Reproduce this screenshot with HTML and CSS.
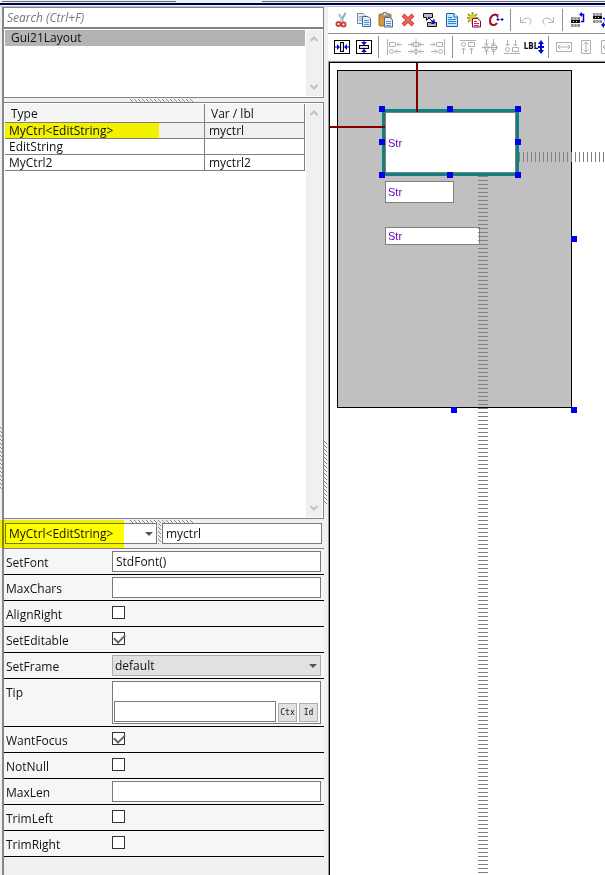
FILE: index.html
```html
<!DOCTYPE html>
<html lang="en">
<head>
<meta charset="utf-8">
<title>Layout designer</title>
<link rel="stylesheet" href="styles.css">
</head>
<body>
<svg class="defs" aria-hidden="true">
  <symbol id="up" viewBox="0 0 8 6"><path d="M0.5 5L4 1.5L7.500 5" fill="none" stroke="#c0c0c0" stroke-width="2"/></symbol>
  <symbol id="down" viewBox="0 0 8 6"><path d="M0.5 1L4 4.500L7.500 1" fill="none" stroke="#c0c0c0" stroke-width="2"/></symbol>
  <symbol id="tri" viewBox="0 0 8 4"><path d="M0 0H8L4 4Z" fill="#555"/></symbol>
</svg>
<header class="topstrip"><span class="tab-a"></span><span class="tab-b"></span></header>
<div class="workspace">
  <div class="edge"><i class="grip grip-edge"></i></div>
  <aside class="sidebar">
    <input class="search" type="search" aria-label="Search" placeholder="Search (Ctrl+F)">
    <section class="pane layouts">
      <ul class="list"><li class="selected">Gui21Layout</li></ul>
      <div class="scroll">
        <button aria-label="Scroll up"><svg><use href="#up"/></svg></button>
        <button aria-label="Scroll down"><svg><use href="#down"/></svg></button>
      </div>
    </section>
    <div class="split"><i class="grip grip-h"></i></div>
    <section class="pane items">
      <div class="table-wrap">
        <table>
          <thead><tr><th>Type</th><th>Var / lbl</th></tr></thead>
          <tbody>
            <tr class="current"><td>MyCtrl&lt;EditString&gt;</td><td>myctrl</td></tr>
            <tr><td>EditString</td><td></td></tr>
            <tr><td>MyCtrl2</td><td>myctrl2</td></tr>
          </tbody>
        </table>
      </div>
      <div class="scroll">
        <button aria-label="Scroll up"><svg><use href="#up"/></svg></button>
        <button aria-label="Scroll down"><svg><use href="#down"/></svg></button>
      </div>
    </section>
    <div class="split"><i class="grip grip-h"></i></div>
    <div class="identity">
      <span class="combo"><select aria-label="Type"><option>MyCtrl&lt;EditString&gt;</option></select><svg><use href="#tri"/></svg></span>
      <i class="grip grip-v"></i>
      <input type="text" aria-label="Variable" value="myctrl">
      <i class="marker"></i>
    </div>
    <form class="props">
      <div class="prop"><label for="font">SetFont</label><input id="font" type="text" value="StdFont()"></div>
      <div class="prop"><label for="maxchars">MaxChars</label><input id="maxchars" type="text"></div>
      <div class="prop"><label for="align">AlignRight</label><input id="align" type="checkbox"></div>
      <div class="prop"><label for="editable">SetEditable</label><input id="editable" type="checkbox" checked></div>
      <div class="prop"><label for="frame">SetFrame</label><span class="combo grey"><select id="frame"><option>default</option></select><svg><use href="#tri"/></svg></span></div>
      <div class="prop"><label for="tip">Tip</label><div class="tip"><input id="tip" type="text"><button type="button">Ctx</button><button type="button">Id</button></div></div>
      <div class="prop"><label for="focus">WantFocus</label><input id="focus" type="checkbox" checked></div>
      <div class="prop"><label for="notnull">NotNull</label><input id="notnull" type="checkbox"></div>
      <div class="prop"><label for="maxlen">MaxLen</label><input id="maxlen" type="text"></div>
      <div class="prop"><label for="trimleft">TrimLeft</label><input id="trimleft" type="checkbox"></div>
      <div class="prop"><label for="trimright">TrimRight</label><input id="trimright" type="checkbox"></div>
    </form>
  </aside>
  <div class="divider"><i class="grip grip-side"></i></div>
  <main class="designer">
    <div class="toolbar">
      <button aria-label="Cut"><svg viewBox="0 0 16 16"><path d="M11.500 1L7 9M5 2L9 9.500" fill="none" stroke="#8aa9c4" stroke-width="2"/><path d="M5 2L8.500 9" stroke="#c8dcea"/><circle cx="4.500" cy="12" r="2" fill="none" stroke="#c9453c" stroke-width="2"/><circle cx="9.500" cy="12.500" r="2" fill="none" stroke="#c9453c" stroke-width="2"/></svg></button>
      <button aria-label="Copy"><svg viewBox="0 0 16 16"><path d="M1.500 1.500H7L9.500 4V11.500H1.500Z" fill="#e4eef8" stroke="#6d8cab"/><path d="M3 4.500H7M3 6.500H7M3 8.500H7" stroke="#86a7cc"/><path d="M6.500 4.500H12L14.500 7V14.500H6.500Z" fill="#e4eef8" stroke="#48688c"/><path d="M8 8.500H13M8 10.500H13M8 12.500H13" stroke="#5d92c8"/></svg></button>
      <button aria-label="Paste"><svg viewBox="0 0 16 16"><rect x="1" y="2" width="12" height="12" rx="1" fill="#d6953b" stroke="#a26a24"/><path d="M4 4V2H5.500V0.500H8.500V2H10V4Z" fill="#dadada" stroke="#777"/><path d="M6.500 5.500H12L14.500 8V15H6.500Z" fill="#e4eef8" stroke="#48688c"/><path d="M8 9.500H13M8 11.500H13M8 13.500H13" stroke="#5d92c8"/></svg></button>
      <button aria-label="Delete"><svg viewBox="0 0 16 16"><path d="M3 3L13 13M13 3L3 13" stroke="#cc3b3b" stroke-width="4"/><path d="M3 3L13 13M13 3L3 13" stroke="#ee6961" stroke-width="2"/></svg></button>
      <button aria-label="Rename"><svg viewBox="0 0 16 16"><path d="M1.500 1.500H10.500V5.500H7.500L4.500 8.500V5.500H1.500ZM5.500 10.500H9L12 7.500V10.500H14.500V14.500H5.500Z" fill="#b9b9b9" stroke="#111"/><path d="M6 5L12 11" stroke="#0000e8"/><path d="M12.500 8V12H8.500Z" fill="#0000e8"/></svg></button>
      <button aria-label="Document"><svg viewBox="0 0 16 16"><path d="M2.500 1.500H10L13.500 5V14.500H2.500Z" fill="#c8e5ff" stroke="#1762a8"/><path d="M10 1.500V5H13.500" fill="#fff" stroke="#1762a8"/><path d="M4 5.500H8M4 7.500H12M4 9.500H12M4 11.500H12" stroke="#2585db"/></svg></button>
      <button aria-label="New item"><svg viewBox="0 0 16 16"><path d="M6.500 0V12M1 6H12.500M2 2L11 10M11 2L2 10" stroke="#a3a31b" stroke-width="2"/><circle cx="6.500" cy="6" r="3" fill="#d3d329"/><path d="M6.500 6.500H11.500L14.500 9V15H6.500Z" fill="#fff" stroke="#850064"/><path d="M8 9.500H11M8 11.500H13M8 13.500H13" stroke="#d62a32"/></svg></button>
      <button aria-label="Code"><svg viewBox="0 0 16 16"><path d="M9.500 4.500C8.500 0.500 2 3 2 9C2 14 7 14 9 11" fill="none" stroke="#99151c" stroke-width="2"/><path d="M10 2L9.500 6" stroke="#99151c"/><path d="M8.500 7.500H11.500M10 6V9M12.500 7.500H15.500M14 6V9" stroke="#0000c8"/></svg></button>
      <i class="sep"></i>
      <button aria-label="Undo"><svg viewBox="0 0 16 16"><path d="M2.500 5V10.500H8M3 10C6 5 13 5 13 9C13 11 12 12 11 12.500" fill="none" stroke="#b4b4b4"/></svg></button>
      <button aria-label="Redo"><svg viewBox="0 0 16 16"><path d="M13.500 5V10.500H8M13 10C10 5 3 5 3 9C3 11 4 12 5 12.500" fill="none" stroke="#b4b4b4"/></svg></button>
      <i class="sep"></i>
      <button aria-label="Move up"><svg viewBox="0 0 16 16"><path d="M1 5H10V8H1ZM1 12H10V15H1Z" fill="#8e8e8e"/><path d="M1 8H10V11H1Z" fill="#111"/><path d="M4 5V8M7 5V8M4 12V15M7 12V15M3 9L4 10M6 9L7 10" stroke="#ddd"/><path d="M11 9.500H13.500V2.500H10.500" fill="none" stroke="#0000df" stroke-width="1.500"/><path d="M9 2.500L12 0V5Z" fill="#0000df"/></svg></button>
      <button aria-label="Move down"><svg viewBox="0 0 16 16"><path d="M1 1H10V4H1ZM1 8H10V11H1Z" fill="#8e8e8e"/><path d="M1 4H10V7H1Z" fill="#111"/><path d="M4 1V4M7 1V4M4 8V11M7 8V11M3 5L4 6M6 5L7 6" stroke="#ddd"/><path d="M11 6.500H13.500V13H10.500" fill="none" stroke="#0000df" stroke-width="1.500"/><path d="M9 13L12 10V16Z" fill="#0000df"/></svg></button>
    </div>
    <div class="toolbar second">
      <button aria-label="Center horizontally"><svg viewBox="0 0 16 16"><rect x="0.500" y="1.500" width="15" height="13" fill="#fff" stroke="#000"/><rect x="6.500" y="3.500" width="3" height="9" fill="#ddd" stroke="#000"/><path d="M1 8H5M15 8H11" stroke="#0000e8"/><path d="M3 5V11L6 8ZM13 5V11L10 8Z" fill="#0000e8"/></svg></button>
      <button aria-label="Center vertically"><svg viewBox="0 0 16 16"><rect x="0.500" y="1.500" width="15" height="13" fill="#fff" stroke="#000"/><rect x="3.500" y="6.500" width="9" height="3" fill="#ddd" stroke="#000"/><path d="M8 2V6M8 14V10" stroke="#0000e8"/><path d="M5 3H11L8 6ZM5 13H11L8 10Z" fill="#0000e8"/></svg></button>
      <i class="sep"></i>
      <button aria-label="Align left"><svg viewBox="0 0 16 16" class="dim"><path d="M1.500 0V16M3.500 3.500H9.500V7.500H3.500ZM11 5.500H16M13 3.500L11 5.500L13 7.500M9 12.500H15M11 10.500L9 12.500L11 14.500"/><circle cx="5.500" cy="12.500" r="2"/></svg></button>
      <button aria-label="Align center"><svg viewBox="0 0 16 16" class="dim"><path d="M8 0V16M5.500 3.500H10.500V7.500H5.500ZM0 5.500H5M3 3.500L5 5.500L3 7.500M16 5.500H11M13 3.500L11 5.500L13 7.500M0 12.500H5M3 10.500L5 12.500L3 14.500M16 12.500H11M13 10.500L11 12.500L13 14.500"/><circle cx="8" cy="12.500" r="2"/></svg></button>
      <button aria-label="Align right"><svg viewBox="0 0 16 16" class="dim"><path d="M14.500 0V16M6.500 3.500H12.500V7.500H6.500ZM0 5.500H5M3 3.500L5 5.500L3 7.500M1 12.500H7M5 10.500L7 12.500L5 14.500"/><circle cx="10.500" cy="12.500" r="2"/></svg></button>
      <i class="sep"></i>
      <button aria-label="Align top"><svg viewBox="0 0 16 16" class="dim"><path d="M0 1.500H16M8.500 3.500H14.500V7.500H8.500ZM3.500 9V15M1.500 11L3.500 9L5.500 11M11.500 9V15M9.500 11L11.500 9L13.500 11"/><circle cx="3.500" cy="5.500" r="2"/></svg></button>
      <button aria-label="Align middle"><svg viewBox="0 0 16 16" class="dim"><path d="M0 8.500H16M9.500 6.500H14.500V10.500H9.500ZM4.500 0V6M2.500 4L4.500 6L6.500 4M11.500 0V6M9.500 4L11.500 6L13.500 4M4.500 16V11M2.500 13L4.500 11L6.500 13M11.500 16V11M9.500 13L11.500 11L13.500 13"/><circle cx="4.500" cy="8.500" r="2"/></svg></button>
      <button aria-label="Align bottom"><svg viewBox="0 0 16 16" class="dim"><path d="M0 14.500H16M8.500 8.500H14.500V12.500H8.500ZM3.500 1V7M1.500 5L3.500 7L5.500 5M11.500 1V7M9.500 5L11.500 7L13.500 5"/><circle cx="3.500" cy="10.500" r="2"/></svg></button>
      <button class="lbl" aria-label="Label height"><span>LBL</span><svg viewBox="0 0 6 16"><path d="M3 3V13M0 8H6" stroke="#0000e8" stroke-width="2"/><path d="M3 1L6 5H0ZM3 15L0 11H6Z" fill="#0000e8"/></svg></button>
      <i class="sep"></i>
      <button aria-label="Same width"><svg viewBox="0 0 16 16" class="dim"><path d="M0.500 3.500H15.500V12.500H0.500ZM2 8H14M4.500 5.500L2 8L4.500 10.500M11.500 5.500L14 8L11.500 10.500"/></svg></button>
      <button aria-label="Same height"><svg viewBox="0 0 16 16" class="dim"><path d="M3.500 1.500H12.500V14.500H3.500ZM8 3V13M5.500 5.500L8 3L10.500 5.500M5.500 10.500L8 13L10.500 10.500"/></svg></button>
      <button aria-label="Same size"><svg viewBox="0 0 16 16" class="dim"><path d="M1.500 1.500H15.500V14.500H1.500ZM3 8H13M5.500 5.500L3 8L5.500 10.500M8 3V13"/></svg></button>
    </div>
    <div class="canvas">
      <div class="form"></div>
      <div class="ctrl c2">Str</div>
      <div class="ctrl c3">Str</div>
      <div class="ctrl c1">Str</div>
      <i class="anchor top"></i><i class="anchor left"></i>
      <i class="spring right"></i><i class="spring bottom"></i>
      <i class="h xa ya"></i><i class="h xb ya"></i><i class="h xc ya"></i>
      <i class="h xa yb"></i><i class="h xc yb"></i>
      <i class="h xa yc"></i><i class="h xb yc"></i><i class="h xc yc"></i>
      <i class="h form-e"></i><i class="h form-s"></i><i class="h form-se"></i>
    </div>
  </main>
</div>
</body>
</html>
```
FILE: styles.css
```css
* { box-sizing: border-box; }
body {
  margin: 0;
  height: 100vh;
  display: flex;
  flex-direction: column;
  overflow: hidden;
  background: #f0f0f0;
  color: #111;
  font: 12px/16px "Open Sans", "Noto Sans", sans-serif;
}
input, select, button { font: inherit; color: inherit; margin: 0; border-radius: 0; }
button { padding: 0; border: 0; background: none; }
svg { display: block; }
.defs { position: absolute; width: 0; height: 0; }

.topstrip {
  flex: none;
  height: 7px;
  display: flex;
  justify-content: space-between;
  padding-left: 2px;
  border-bottom: 1px solid #b9bdd6;
  background: linear-gradient(#f0f2f2 3px, #000050 3px 5px, #f0f2f2 5px);
}
.tab-a { width: 174px; height: 2px; border-bottom: 1px solid #667; }
.tab-b { width: 343px; height: 2px; border-bottom: 1px solid #667; }
.workspace { flex: 1; min-height: 0; display: flex; }

.grip {
  --dot: conic-gradient(at 1px 1px, transparent 75%, #888 0);
  display: block;
  background: var(--dot) 0 0 / 4px 4px, var(--dot) 1px 1px / 4px 4px, var(--dot) 2px 2px / 4px 4px;
}
.edge { flex: none; width: 2px; padding-top: 420px; }
.grip-edge { width: 2px; height: 62px; }
.divider { flex: none; width: 4px; padding-top: 434px; }
.grip-side { width: 3px; height: 63px; }
.grip-h { width: 63px; height: 3px; }
.grip-v { width: 3px; height: 21px; }

.sidebar {
  flex: 0 0 322px;
  min-width: 0;
  display: flex;
  flex-direction: column;
  border-left: 2px solid #828790;
}
.search {
  height: 21px;
  padding: 0 3px;
  border: 1px solid #828287;
  border-left: 0;
  outline: 0;
  background: #fff;
  font-style: italic;
}
.search::placeholder { color: #777; opacity: 1; }
.pane {
  display: flex;
  padding: 1px;
  border: 1px solid #828287;
  border-left: 0;
  background: #fff;
}
.layouts { height: 70px; }
.items { flex: 1; min-height: 0; }
.list { flex: 1; margin: 0; padding: 0; list-style: none; }
.selected { height: 16px; padding-left: 6px; background: #b4b4b4; line-height: 16px; }
.scroll {
  width: 16px;
  margin-left: 1px;
  padding: 6px 4px;
  display: flex;
  flex-direction: column;
  justify-content: space-between;
  background: #f0f0f0;
}
.scroll svg { width: 8px; height: 6px; }
.split {
  flex: none;
  height: 4px;
  display: flex;
  justify-content: center;
  align-items: center;
  padding-right: 6px;
}

.table-wrap { flex: 1; }
table { width: 100%; border-collapse: separate; border-spacing: 0; table-layout: fixed; }
th, td {
  height: 16px;
  padding: 0 4px;
  border: solid #808080;
  border-width: 0 1px 1px 0;
  line-height: 15px;
  text-align: left;
  font-weight: normal;
}
th { height: 19px; padding: 0 6px; background: #f5f5f5; }
th:first-child { width: 200px; }
.current td { background: #f0f0f0; }
.current td:first-child { background: linear-gradient(90deg, #f2f200 154px, #f0f0f0 154px); }

.identity { position: relative; flex: none; display: flex; gap: 1px; padding: 0 2px 4px 1px; }
.identity input, .identity .combo { flex: 1; min-width: 0; height: 21px; }
.identity .combo { padding-right: 0; }
.marker {
  position: absolute;
  left: -4px;
  top: -3px;
  width: 124px;
  height: 28px;
  background: #ff0;
  mix-blend-mode: multiply;
}
input[type="text"] { min-width: 0; padding: 0 3px; border: 1px solid #7a7a7a; background: #fff; outline: 0; }
.combo { display: grid; align-items: center; }
.combo > * { grid-area: 1 / 1; }
.combo select {
  width: 100%;
  height: 21px;
  padding: 0 3px;
  border: 1px solid #7a7a7a;
  background: #fff;
  appearance: none;
}
.combo svg { width: 8px; height: 4px; justify-self: end; margin-right: 4px; pointer-events: none; }
.identity > input, .identity > .combo { box-sizing: border-box; flex-basis: 0; }
.grey select { background: #e1e1e1; border-color: #adadad; padding: 0 2px; }

.props { flex: none; height: 327px; border-top: 1px solid #808080; }
.prop {
  display: flex;
  align-items: flex-start;
  min-height: 26px;
  padding: 2px 3px 2px 2px;
  border-bottom: 1px solid #000;
  background: #f6f6f6;
}
.prop label { flex: none; width: 106px; padding-top: 4px; }
.prop > input[type="text"], .prop .combo { flex: 1; min-width: 0; height: 21px; }
.prop input[type="checkbox"] {
  appearance: none;
  width: 13px;
  height: 13px;
  margin-top: 3px;
  border: 1px solid #333;
  background: #fff;
}
.prop input[type="checkbox"]:checked::before {
  content: "";
  display: block;
  width: 9px;
  height: 5px;
  margin: 1px;
  border: solid #666;
  border-width: 0 0 2px 2px;
  transform: rotate(-45deg);
}
.prop .tip {
  flex: 1;
  min-width: 0;
  height: 43px;
  display: flex;
  align-items: flex-end;
  gap: 2px;
  padding: 0 2px 1px 1px;
  border: 1px solid #7a7a7a;
  background: #fff;
}
.tip input { flex: 1; height: 21px; }
.tip button {
  flex: none;
  width: 19px;
  height: 19px;
  border: 1px solid #adadad;
  background: #e1e1e1;
  font: 8px/16px "DejaVu Sans Mono", monospace;
}

.designer { flex: 1; min-width: 0; display: flex; flex-direction: column; }
.toolbar {
  flex: none;
  height: 27px;
  display: flex;
  align-items: center;
  padding-left: 3px;
  border-bottom: 1px solid #909090;
  background: #fff;
  overflow: hidden;
}
.second { height: 26px; border-bottom: 0; }
.second + .canvas { margin-top: 2px; }
.toolbar button { flex: none; width: 22px; display: flex; justify-content: center; align-items: center; }
.toolbar svg { width: 16px; height: 16px; }
.sep { flex: none; width: 8px; height: 22px; background: linear-gradient(#909090, #909090) 3px 0 / 1px 100% no-repeat; }
.dim { fill: none; stroke: #b0b0b0; }
.toolbar .lbl { font: bold 8px/16px "Liberation Sans Narrow", "DejaVu Sans Condensed", sans-serif; }
.toolbar .lbl svg { width: 6px; }

.canvas {
  position: relative;
  flex: 1;
  overflow: hidden;
  border: solid #000;
  border-width: 1px 0 0 1px;
  outline: 1px solid #999;
  margin: 1px 0 0 1px;
  background: #fff;
}
.canvas > * { position: absolute; }
.form { left: 7px; top: 7px; width: 235px; height: 338px; border: 1px solid #000; background: #c0c0c0; }
.ctrl {
  left: 55px;
  display: flex;
  align-items: center;
  padding-left: 2px;
  border: 1px solid #808080;
  background: #fff;
  color: #7000c8;
  font: 11px/14px "Liberation Sans", sans-serif;
}
.c1 { top: 49px; width: 131px; height: 61px; box-shadow: 0 0 0 3px #108080; }
.c2 { top: 118px; width: 69px; height: 22px; }
.c3 { top: 164px; width: 95px; height: 18px; }
.anchor { background: #800000; }
.anchor.top { left: 86px; top: 0; width: 2px; height: 49px; }
.anchor.left { left: 0; top: 63px; width: 55px; height: 2px; }
.spring.right {
  left: 185px; right: 0; top: 89px; height: 10px;
  background: repeating-linear-gradient(90deg, #808080 0 1px, transparent 1px 4px);
}
.spring.bottom {
  left: 148px; top: 109px; bottom: 0; width: 10px;
  background: repeating-linear-gradient(#808080 0 1px, transparent 1px 4px);
}
.h { width: 6px; height: 6px; background: #0000f0; }
.xa { left: 49px; }
.xb { left: 117px; }
.xc { left: 185px; }
.ya { top: 43px; }
.yb { top: 76px; }
.yc { top: 109px; }
.form-e { left: 241px; top: 173px; }
.form-s { left: 121px; top: 344px; }
.form-se { left: 241px; top: 344px; }
```
